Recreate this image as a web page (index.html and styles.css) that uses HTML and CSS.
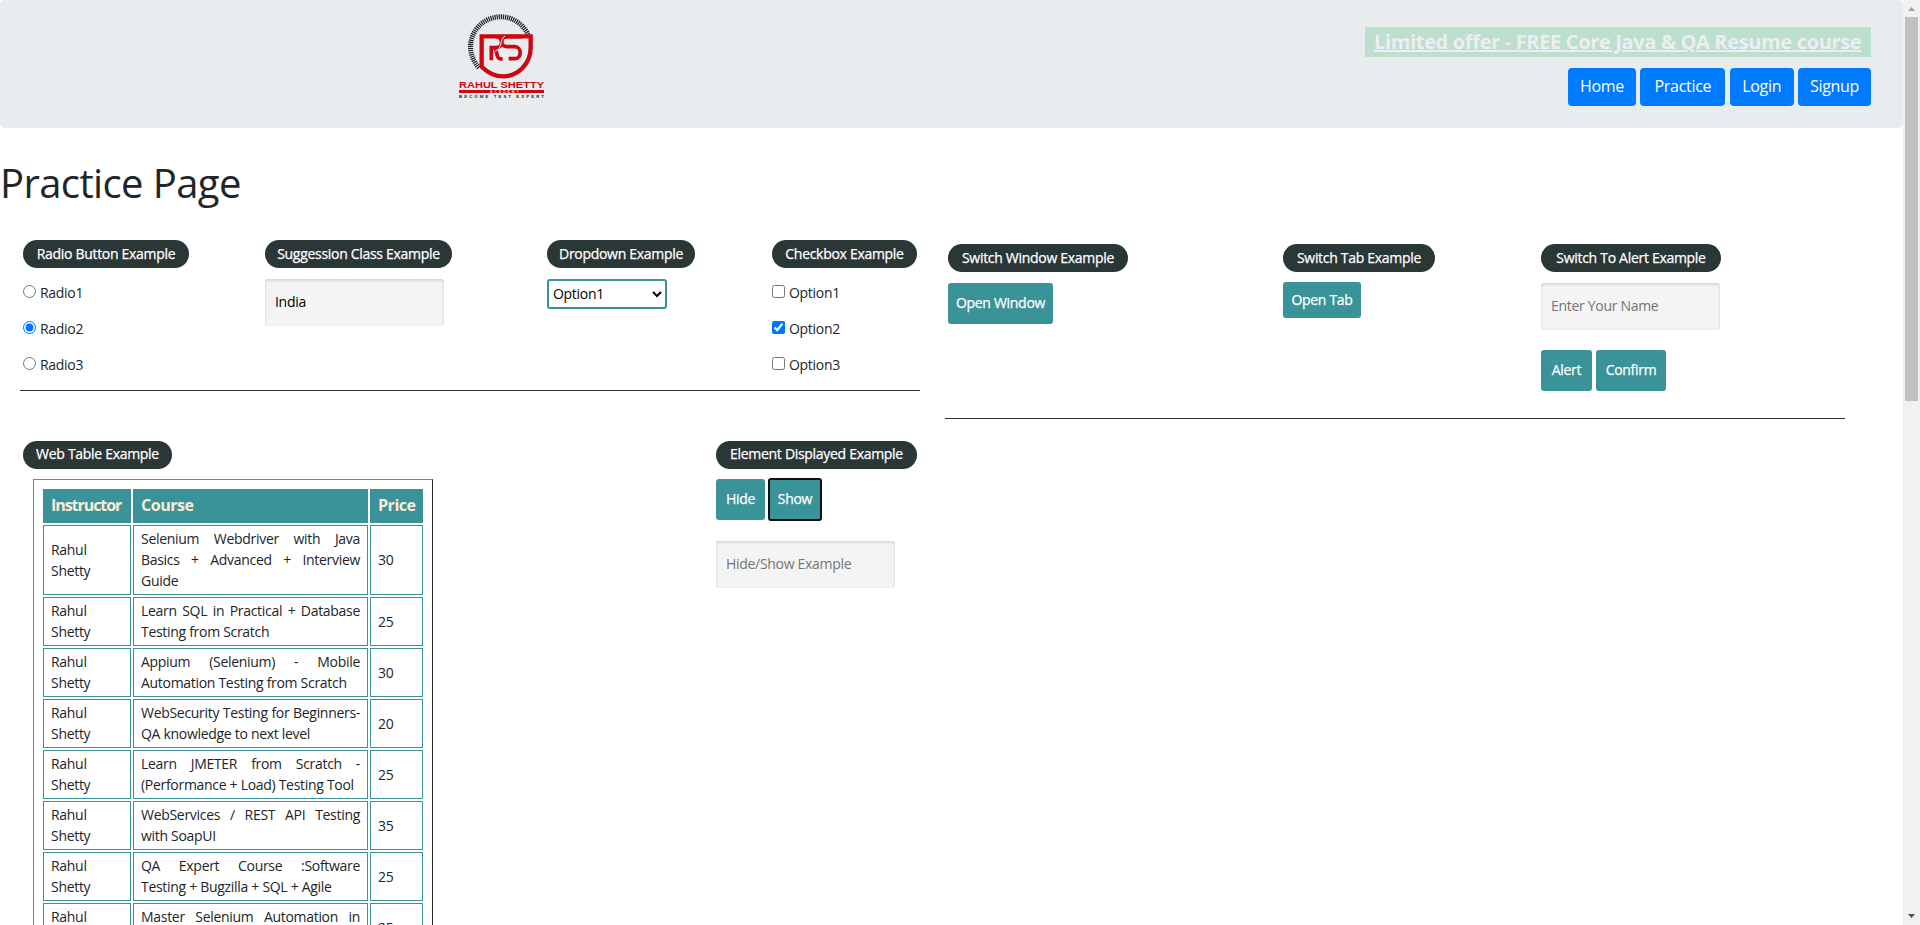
FILE: index.html
```html
<!DOCTYPE html>
<html lang="en">
<head>
<meta charset="utf-8">
<title>Practice Page</title>
<link rel="stylesheet" href="styles.css">
</head>
<body>
<div class="page">
<header class="top">
  <svg class="logo" viewBox="54 39 258 258" aria-label="Rahul Shetty Academy">
    <path class="hatch" d="M117 203A90 90 0 1 1 264 104"/>
    <path class="red-line" d="M125 200V109H272V142C272 192 234 229 190 229C162 229 140 215 125 200Z"/>
    <path class="red-thin" d="M154 181V143H168C190 143 192 110 168 110M166 145L173 170Q175 177 188 177"/>
    <path class="red-thin" d="M245 110H202C180 110 178 140 200 140H224C246 140 246 176 224 176H206"/>
    <path class="split" d="M165 154C188 147 178 118 195 108"/>
    <text class="logo-name" x="57" y="264" textLength="255" lengthAdjust="spacingAndGlyphs">RAHUL SHETTY</text>
    <rect class="red-bar" x="57" y="270" width="255" height="9"/>
    <text class="logo-sub" x="150" y="279" textLength="86">ACADEMY</text>
    <text class="logo-tag" x="57" y="294" textLength="255">BECOME TEST EXPERT</text>
  </svg>
  <div class="top-right">
    <a class="offer"><span>Limited offer - FREE Core Java &amp; QA Resume course</span></a>
    <nav class="nav">
      <a class="w68">Home</a><a class="w85">Practice</a><a class="w64">Login</a><a class="w73">Signup</a>
    </nav>
  </div>
</header>
<h1>Practice Page</h1>
<main class="columns">
  <div class="left">
    <section class="row first">
      <div>
        <div class="pill w166">Radio Button Example</div>
        <label class="choice"><input type="radio" name="r"><span>Radio1</span></label>
        <label class="choice"><input type="radio" name="r" checked><span>Radio2</span></label>
        <label class="choice"><input type="radio" name="r"><span>Radio3</span></label>
      </div>
      <div>
        <div class="pill w187">Suggession Class Example</div>
        <input class="field" type="text" value="India">
      </div>
      <div>
        <div class="pill w148">Dropdown Example</div>
        <select class="select"><option>Option1</option></select>
      </div>
      <div>
        <div class="pill w145">Checkbox Example</div>
        <label class="choice"><input type="checkbox"><span>Option1</span></label>
        <label class="choice"><input type="checkbox" checked><span>Option2</span></label>
        <label class="choice"><input type="checkbox"><span>Option3</span></label>
      </div>
    </section>
    <section class="row second">
      <div>
        <div class="pill w149">Web Table Example</div>
        <table class="courses">
          <colgroup><col class="c1"><col class="c2"><col class="c3"></colgroup>
          <tr><th class="tight">Instructor</th><th>Course</th><th>Price</th></tr>
          <tr><td>Rahul<br>Shetty</td><td><p>Selenium Webdriver with Java</p><p>Basics + Advanced + Interview</p>Guide</td><td>30</td></tr>
          <tr><td>Rahul<br>Shetty</td><td><p>Learn SQL in Practical + Database</p>Testing from Scratch</td><td>25</td></tr>
          <tr><td>Rahul<br>Shetty</td><td><p>Appium (Selenium) - Mobile</p>Automation Testing from Scratch</td><td>30</td></tr>
          <tr><td>Rahul<br>Shetty</td><td><p>WebSecurity Testing for Beginners-</p>QA knowledge to next level</td><td>20</td></tr>
          <tr><td>Rahul<br>Shetty</td><td><p>Learn JMETER from Scratch -</p>(Performance + Load) Testing Tool</td><td>25</td></tr>
          <tr><td>Rahul<br>Shetty</td><td><p>WebServices / REST API Testing</p>with SoapUI</td><td>35</td></tr>
          <tr><td>Rahul<br>Shetty</td><td><p>QA Expert Course :Software</p>Testing + Bugzilla + SQL + Agile</td><td>25</td></tr>
          <tr><td>Rahul<br>Shetty</td><td><p>Master Selenium Automation in</p>simple Python Language</td><td>25</td></tr>
        </table>
      </div>
      <div>
        <div class="pill w201">Element Displayed Example</div>
        <div class="buttons"><button class="btn w49">Hide</button><button class="btn w52 focused">Show</button></div>
        <input class="field" type="text" placeholder="Hide/Show Example">
      </div>
    </section>
  </div>
  <div class="right">
    <section class="row third">
      <div>
        <div class="pill w180">Switch Window Example</div>
        <button class="btn w105">Open Window</button>
      </div>
      <div>
        <div class="pill w152">Switch Tab Example</div>
        <a class="btn tab">Open Tab</a>
      </div>
      <div>
        <div class="pill w180">Switch To Alert Example</div>
        <input class="field" type="text" placeholder="Enter Your Name">
        <div class="buttons alerts"><button class="btn w51">Alert</button><button class="btn w70">Confirm</button></div>
      </div>
    </section>
  </div>
</main>
</div>
<div class="scrollbar">
  <svg viewBox="0 0 17 17"><path class="arrow-up" d="M5 11L8.5 7L12 11Z"/></svg>
  <div class="thumb"></div>
  <svg viewBox="0 0 17 17"><path class="arrow-down" d="M5 6L8.5 10L12 6Z"/></svg>
</div>
</body>
</html>
```
FILE: styles.css
```css
* { box-sizing: border-box; }
html, body { height: 100%; }
body {
  margin: 0;
  display: flex;
  height: 925px;
  overflow: hidden;
  background: #fff;
  color: #212529;
  font: 14px/21px "Trebuchet MS", "Open Sans", sans-serif;
  letter-spacing: -0.3px;
}
.page { width: 1903px; height: 925px; overflow: hidden; }

.top {
  display: flex;
  justify-content: space-between;
  height: 128px;
  padding: 13px 32px 0 458px;
  background: #e9ecef;
  border-radius: 5px;
}
.logo { width: 86px; height: 86px; }
.hatch { fill: none; stroke: #1d1d1f; stroke-width: 15; stroke-dasharray: 3.6 2.6; }
.red-line { fill: #e9ecef; stroke: #cc0710; stroke-width: 13; }
.red-thin { fill: none; stroke: #cc0710; stroke-width: 11; }
.split { fill: none; stroke: #e9ecef; stroke-width: 3; }
.red-bar, .logo-name { fill: #cc0710; }
.logo-name { font: 700 29px "Liberation Sans", sans-serif; letter-spacing: 0; }
.logo-sub { font: 700 10px "Liberation Sans", sans-serif; fill: #f3dada; }
.logo-tag { font: 700 13px "Liberation Sans", sans-serif; letter-spacing: 0; fill: #222; }
.top-right { display: flex; flex-direction: column; align-items: flex-end; padding-top: 14px; }
.offer {
  width: 506px;
  height: 30px;
  margin: 0 0 11px;
  padding-left: 9px;
  background: #bcdfce;
  color: #eceef1;
  font-size: 20px;
  font-weight: 700;
  line-height: 29px;
  letter-spacing: -0.34px;
  white-space: nowrap;
  text-decoration: underline;
  text-decoration-thickness: 2px;
}
.nav { display: flex; gap: 4.33px; }
.nav a {
  height: 38px;
  border-radius: 4px;
  background: #007bff;
  color: #fff;
  font-size: 16px;
  line-height: 37px;
  text-align: center;
}

h1 {
  margin: 31px 0 0;
  font-size: 40px;
  font-weight: 400;
  line-height: 48px;
  letter-spacing: -0.6px;
}
.columns { display: flex; gap: 25px; padding: 33px 0 0 20px; }
.left { flex: none; width: 900px; }
.right { flex: none; width: 900px; padding-top: 4px; }
.row { display: grid; align-items: start; }
.first { grid-template-columns: 242px 282px 225px 145px; height: 151px; padding-left: 3px; border-bottom: 1px solid #2b3636; }
.second { grid-template-columns: 693px 201px; padding: 50px 0 0 3px; }
.third { grid-template-columns: 335px 258px 180px; height: 175px; padding-left: 3px; border-bottom: 1px solid #2b3636; }

.pill {
  height: 28px;
  margin-bottom: 11px;
  border-radius: 14px;
  background: #2b3636;
  color: #fff;
  line-height: 27px;
  text-align: center;
  white-space: nowrap;
  -webkit-text-stroke: 0.25px #fff;
}
.second .pill { margin-bottom: 10px; line-height: 26px; }
.choice { display: flex; gap: 4px; height: 21px; margin-bottom: 15px; line-height: 27px; }
.choice input { width: 13px; height: 13px; margin: 6px 0 0; accent-color: #0075ff; }
.field {
  display: block;
  width: 179px;
  height: 47px;
  padding: 0 10px 2px;
  border: 0;
  border-radius: 3px;
  background: #f4f4f4;
  box-shadow: inset 0 2px 3px rgba(0, 0, 0, .1), inset 0 0 2px rgba(0, 0, 0, .1);
  color: #000;
  font: inherit;
  letter-spacing: inherit;
}
.field::placeholder { color: #757575; }
.select {
  display: block;
  width: 120px;
  height: 30px;
  padding: 0 0 1px;
  border: 2px solid #3a9398;
  border-radius: 3px;
  background: #fff;
  color: #000;
  font: inherit;
  letter-spacing: inherit;
}
.btn {
  display: block;
  height: 41px;
  padding: 0 0 2px;
  border: 0;
  border-radius: 3px;
  background: #3a9398;
  color: #fff;
  font: inherit;
  letter-spacing: inherit;
  text-align: center;
  white-space: nowrap;
  -webkit-text-stroke: 0.25px #fff;
}
.tab { width: 78px; height: 36px; margin-top: -1px; line-height: 35px; }
.focused { border-radius: 2px; outline: 2px solid #101010; outline-offset: -1px; }
.buttons { display: flex; gap: 4px; margin-bottom: 21px; }
.alerts { margin: 20px 0 0; }

.courses {
  width: 400px;
  margin-left: 10px;
  padding: 7px;
  border: 1px solid;
  border-color: #808080 #2c2c2c #2c2c2c #808080;
  border-spacing: 2px;
  table-layout: fixed;
}
.courses th, .courses td { border: 1px solid #3a9398; padding: 2px 7px 3px; text-align: left; white-space: nowrap; }
.courses th { height: 34px; background: #3a9398; color: #faebd7; font-size: 16px; font-weight: 700; letter-spacing: -0.45px; }
.courses .tight { letter-spacing: -1.05px; }
.courses p { margin: 0; text-align: justify; text-align-last: justify; }
.c1 { width: 88px; }
.c2 { width: 235px; }
.c3 { width: 53px; }

.w49 { width: 49px; }
.w51 { width: 51px; }
.w52 { width: 52px; }
.w64 { width: 64px; }
.w68 { width: 68px; }
.w70 { width: 70px; }
.w73 { width: 73px; }
.w85 { width: 85px; }
.w105 { width: 105px; }
.w145 { width: 145px; }
.w148 { width: 148px; }
.w149 { width: 149px; }
.w152 { width: 152px; }
.w166 { width: 166px; }
.w180 { width: 180px; }
.w187 { width: 187px; }
.w201 { width: 201px; }

.scrollbar { display: flex; flex-direction: column; align-items: center; width: 17px; height: 925px; background: #f1f1f1; }
.scrollbar svg { width: 17px; height: 17px; }
.thumb { width: 13px; height: 384px; margin-bottom: auto; background: #c1c1c1; }
.arrow-up { fill: #a3a3a3; }
.arrow-down { fill: #505050; }
```
